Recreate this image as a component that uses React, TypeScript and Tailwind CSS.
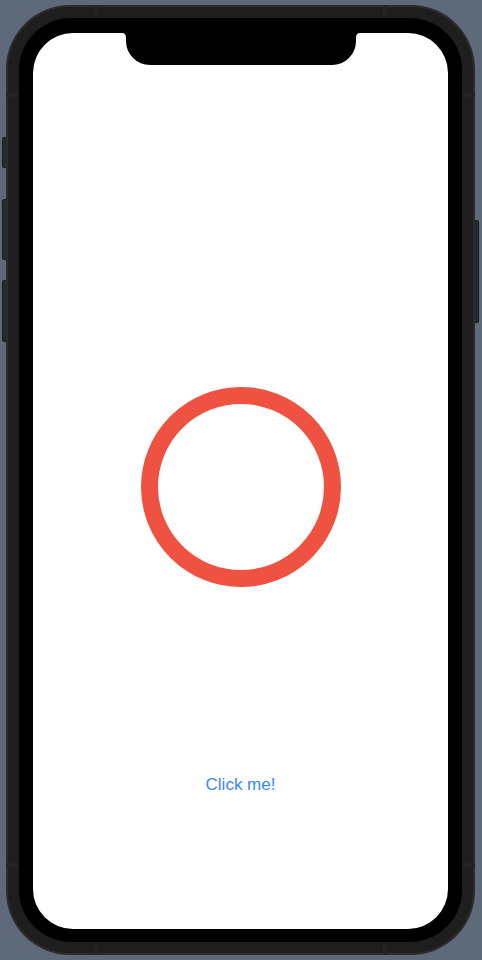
import React from 'react';

const Notch = () => (
  <svg width="238" height="32" viewBox="0 0 238 32" className="block">
    <path d="M0 0 Q4 0 4 5 V8 A24 24 0 0 0 28 32 H210 A24 24 0 0 0 234 8 V5 Q234 0 238 0 Z" fill="#000" />
  </svg>
);

const App = () => {
  return (
    <div className="w-[482px] h-[960px] bg-[#5e6a7a] pt-[5px] pl-[6px] overflow-hidden">
      {/* Phone body */}
      <div className="relative w-[469px] h-[950px]">
        {/* side buttons */}
        <div className="absolute left-[-4px] top-[132px] w-[5px] h-[31px] rounded-l-[2px] bg-[#26292e] border border-[#1b1d21]" />
        <div className="absolute left-[-4px] top-[194px] w-[5px] h-[61px] rounded-l-[2px] bg-[#26292e] border border-[#1b1d21]" />
        <div className="absolute left-[-4px] top-[275px] w-[5px] h-[62px] rounded-l-[2px] bg-[#26292e] border border-[#1b1d21]" />
        <div className="absolute right-[-4px] top-[215px] w-[5px] h-[103px] rounded-r-[2px] bg-[#26292e] border border-[#1b1d21]" />

        <div className="relative w-full h-full rounded-[64px] bg-[#2c2c2c] p-[2px]">
          <div className="w-full h-full rounded-[62px] bg-[#1e1e1e] p-[11px]">
            <div className="w-full h-full rounded-[52px] bg-black pt-[15px] pb-[13px] px-[14px]">
              {/* Screen */}
              <div className="relative w-full h-full rounded-[40px] bg-white flex flex-col items-center overflow-hidden">
                <div className="absolute top-0 left-1/2 -translate-x-1/2">
                  <Notch />
                </div>
                <div className="mt-[354px] w-[200px] h-[200px] rounded-full border-[17px] border-[#ef5241]" />
                <button className="mt-[188px] text-[17px] leading-[20px] text-[#3a88f5] font-['Liberation_Sans',Arial,sans-serif]">
                  Click me!
                </button>
              </div>
            </div>
          </div>
          {/* antenna lines */}
          <div className="absolute top-0 left-[88px] w-[4px] h-[13px] bg-[#232323]" />
          <div className="absolute top-0 right-[88px] w-[4px] h-[13px] bg-[#232323]" />
          <div className="absolute bottom-0 left-[88px] w-[4px] h-[13px] bg-[#232323]" />
          <div className="absolute bottom-0 right-[88px] w-[4px] h-[13px] bg-[#232323]" />
          <div className="absolute left-0 top-[88px] w-[13px] h-[4px] bg-[#232323]" />
          <div className="absolute right-0 top-[88px] w-[13px] h-[4px] bg-[#232323]" />
          <div className="absolute left-0 bottom-[88px] w-[13px] h-[4px] bg-[#232323]" />
          <div className="absolute right-0 bottom-[88px] w-[13px] h-[4px] bg-[#232323]" />
        </div>
      </div>
    </div>
  );
};

export default App;
